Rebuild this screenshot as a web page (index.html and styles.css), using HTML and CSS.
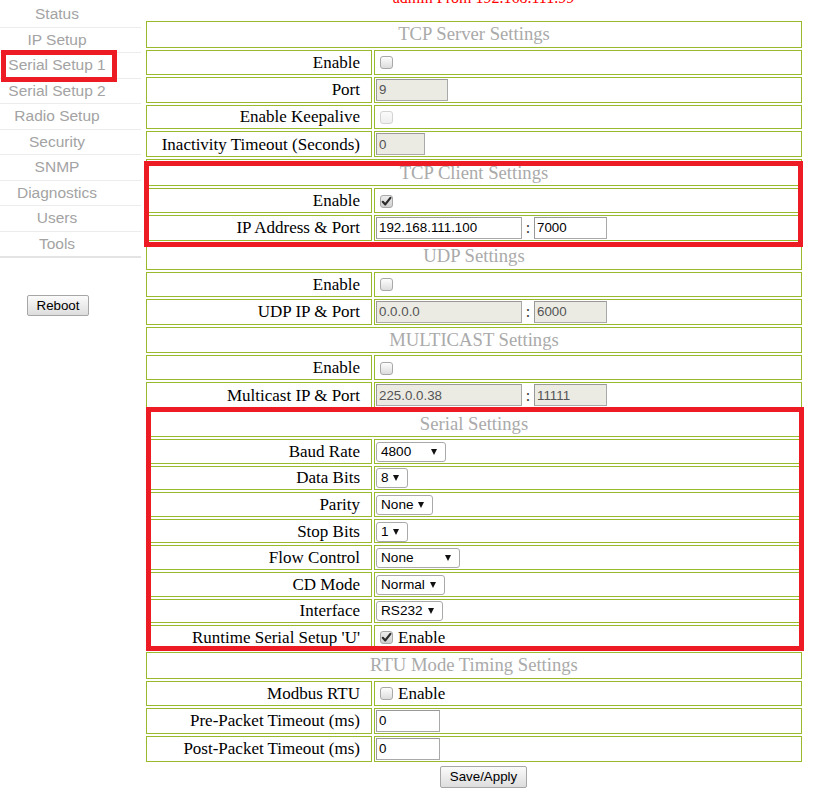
FILE: index.html
```html
<!DOCTYPE html>
<html lang="en">
<head>
<meta charset="utf-8">
<title>Serial Setup 1</title>
<link rel="stylesheet" href="styles.css">
</head>
<body>
<div class="page">
  <nav class="side">
    <ul class="menu">
      <li>Status</li>
      <li>IP Setup</li>
      <li>Serial Setup 1</li>
      <li>Serial Setup 2</li>
      <li>Radio Setup</li>
      <li>Security</li>
      <li>SNMP</li>
      <li>Diagnostics</li>
      <li>Users</li>
      <li>Tools</li>
    </ul>
    <div class="side-actions"><button class="btn btn-reboot">Reboot</button></div>
  </nav>
  <main class="main">
    <div class="user">admin From 192.168.111.99</div>
    <table class="settings">
      <tr class="hdr"><td colspan="2">TCP Server Settings</td></tr>
      <tr class="r-cb"><td class="lbl">Enable</td><td class="val"><span class="cb"></span></td></tr>
      <tr class="r-in"><td class="lbl">Port</td><td class="val"><input class="txt dis w-port" value="9" readonly></td></tr>
      <tr class="r-cb"><td class="lbl">Enable Keepalive</td><td class="val"><span class="cb dis"></span></td></tr>
      <tr class="r-in"><td class="lbl">Inactivity Timeout (Seconds)</td><td class="val"><input class="txt dis w-inact" value="0" readonly></td></tr>

      <tr class="hdr"><td colspan="2">TCP Client Settings</td></tr>
      <tr class="r-cb"><td class="lbl">Enable</td><td class="val"><span class="cb on"><svg viewBox="0 0 11 11" class="tick"><path d="M1.8 5.8 L4.3 8.4 L9.4 1.8"/></svg></span></td></tr>
      <tr class="r-in"><td class="lbl">IP Address &amp; Port</td><td class="val"><div class="pair"><input class="txt w-ip" value="192.168.111.100"><span class="colon">:</span><input class="txt w-ipport" value="7000"></div></td></tr>

      <tr class="hdr"><td colspan="2">UDP Settings</td></tr>
      <tr class="r-cb"><td class="lbl">Enable</td><td class="val"><span class="cb"></span></td></tr>
      <tr class="r-in"><td class="lbl">UDP IP &amp; Port</td><td class="val"><div class="pair"><input class="txt dis w-ip" value="0.0.0.0" readonly><span class="colon">:</span><input class="txt dis w-ipport" value="6000" readonly></div></td></tr>

      <tr class="hdr"><td colspan="2">MULTICAST Settings</td></tr>
      <tr class="r-cb"><td class="lbl">Enable</td><td class="val"><span class="cb"></span></td></tr>
      <tr class="r-in"><td class="lbl">Multicast IP &amp; Port</td><td class="val"><div class="pair"><input class="txt dis w-ip" value="225.0.0.38" readonly><span class="colon">:</span><input class="txt dis w-ipport" value="11111" readonly></div></td></tr>

      <tr class="hdr"><td colspan="2">Serial Settings</td></tr>
      <tr class="r-sel"><td class="lbl">Baud Rate</td><td class="val"><span class="sel s-baud"><span>4800</span><span class="arr"></span></span></td></tr>
      <tr class="r-sel"><td class="lbl">Data Bits</td><td class="val"><span class="sel s-data"><span>8</span><span class="arr"></span></span></td></tr>
      <tr class="r-sel"><td class="lbl">Parity</td><td class="val"><span class="sel s-parity"><span>None</span><span class="arr"></span></span></td></tr>
      <tr class="r-sel"><td class="lbl">Stop Bits</td><td class="val"><span class="sel s-stop"><span>1</span><span class="arr"></span></span></td></tr>
      <tr class="r-sel"><td class="lbl">Flow Control</td><td class="val"><span class="sel s-flow"><span>None</span><span class="arr"></span></span></td></tr>
      <tr class="r-sel"><td class="lbl">CD Mode</td><td class="val"><span class="sel s-cd"><span>Normal</span><span class="arr"></span></span></td></tr>
      <tr class="r-sel"><td class="lbl">Interface</td><td class="val"><span class="sel s-if"><span>RS232</span><span class="arr"></span></span></td></tr>
      <tr class="r-cb"><td class="lbl">Runtime Serial Setup 'U'</td><td class="val"><div class="cbl"><span class="cb on"><svg viewBox="0 0 11 11" class="tick"><path d="M1.8 5.8 L4.3 8.4 L9.4 1.8"/></svg></span>Enable</div></td></tr>

      <tr class="hdr"><td colspan="2">RTU Mode Timing Settings</td></tr>
      <tr class="r-cb"><td class="lbl">Modbus RTU</td><td class="val"><div class="cbl"><span class="cb"></span>Enable</div></td></tr>
      <tr class="r-in"><td class="lbl">Pre-Packet Timeout (ms)</td><td class="val"><input class="txt w-ms" value="0"></td></tr>
      <tr class="r-in"><td class="lbl">Post-Packet Timeout (ms)</td><td class="val"><input class="txt w-ms" value="0"></td></tr>
    </table>
    <div class="actions"><button class="btn btn-save">Save/Apply</button></div>
  </main>
</div>
<div class="mark mark-nav"></div>
<div class="mark mark-client"></div>
<div class="mark mark-serial"></div>
</body>
</html>
```
FILE: styles.css
```css
* { box-sizing: border-box; }

body {
  margin: 0;
  background: #fff;
  font-family: "Liberation Serif", "Times New Roman", serif;
  overflow: hidden;
}

.page {
  display: flex;
  align-items: flex-start;
  gap: 3px;
}

/* ---------- sidebar ---------- */
.side {
  width: 141px;
  flex: none;
  padding-top: 2px;
}

.menu {
  list-style: none;
  margin: 0;
  padding: 0;
}

.menu li {
  font-family: "Liberation Sans", Arial, sans-serif;
  font-size: 15.5px;
  line-height: 18.5px;
  padding: 3px 27px 3px 0;
  text-align: center;
  color: #a3a3a3;
  border-bottom: 1px solid #ececec;
}

.menu li:last-child {
  border-bottom: 2px solid #e4e4e4;
}

.side-actions {
  padding: 37px 25px 0 0;
  text-align: center;
}

.btn {
  font-family: "Liberation Sans", Arial, sans-serif;
  font-size: 13.33px;
  color: #000;
  margin: 0;
  padding: 0 8px;
  border: 1px solid #a6a6a6;
  border-radius: 2px;
  background: linear-gradient(#fbfbfb, #dddddd);
}

.btn-reboot { height: 21px; width: 62px; }
.btn-save { height: 22px; width: 87px; }

/* ---------- main ---------- */
.main {
  width: 679px;
  flex: none;
}

.user {
  margin-top: -11px;
  height: 18px;
  line-height: 18px;
  font-size: 16px;
  color: #ff0000;
  text-align: center;
}

.settings {
  border-collapse: separate;
  border-spacing: 2px;
  width: 660px;
  margin-top: 12px;
}

.settings td {
  border: 1px solid #9aba2e;
  padding: 0;
  vertical-align: middle;
}

.hdr td {
  height: 26.8px;
  text-align: center;
  color: #aaaaaa;
  font-size: 18.67px;
  line-height: 20px;
}

.r-cb td { height: 24.8px; }
.r-in td { height: 26px; }
.r-sel td { height: 24.6px; }

.settings td.lbl {
  width: 226px;
  text-align: right;
  padding-right: 11px;
  font-size: 17px;
  line-height: 19px;
  color: #000;
}

.settings td.val {
  padding-left: 1px;
  font-size: 17px;
  line-height: 19px;
}

/* checkbox */
.cb {
  display: inline-block;
  position: relative;
  width: 13px;
  height: 13px;
  margin: 3px 3px 3px 4px;
  vertical-align: middle;
  border: 1px solid #a8a8a8;
  border-radius: 3px;
  background: linear-gradient(#fdfdfd, #dcdcdc);
}

.cb.dis {
  border-color: #d3d3d3;
  background: linear-gradient(#fbfbfb, #eeeeee);
}

.cb.on {
  background: linear-gradient(#ececec, #cfcfcf);
}

.tick {
  position: absolute;
  left: 0;
  top: 0;
  width: 11px;
  height: 11px;
}

.tick path {
  fill: none;
  stroke: #2b2b2b;
  stroke-width: 2.2;
  stroke-linecap: round;
  stroke-linejoin: round;
}

.cbl {
  display: flex;
  align-items: center;
}

.cbl .cb { margin-right: 5px; }

/* text inputs */
.pair {
  display: flex;
  align-items: center;
}

.txt {
  font-family: "Liberation Sans", Arial, sans-serif;
  font-size: 13.33px;
  height: 22px;
  margin: 0;
  padding: 1px 2px;
  border: 1px solid #a9a9a9;
  border-top-color: #999;
  border-left-color: #999;
  background: #fff;
  color: #000;
  vertical-align: middle;
  outline: none;
}

.txt.dis {
  background: #ebebe4;
  color: #545454;
}

.w-port { width: 72px; }
.w-inact { width: 49px; }
.w-ip { width: 146px; }
.w-ipport { width: 73px; }
.w-ms { width: 64px; }

.colon {
  display: inline-block;
  width: 12px;
  text-align: center;
  font-size: 16px;
  color: #333;
}

/* selects */
.sel {
  display: inline-flex;
  align-items: center;
  justify-content: space-between;
  height: 20px;
  padding: 0 8px 0 4px;
  border: 1px solid #a9a9a9;
  border-radius: 3px;
  background: #fff;
  font-family: "Liberation Sans", Arial, sans-serif;
  font-size: 13.6px;
  line-height: 16px;
  color: #000;
  vertical-align: middle;
}

.arr {
  width: 0;
  height: 0;
  border-left: 3px solid transparent;
  border-right: 3px solid transparent;
  border-top: 6px solid #111;
}

.s-baud { width: 70px; }
.s-data { width: 32px; }
.s-parity { width: 57px; }
.s-stop { width: 32px; }
.s-flow { width: 84px; }
.s-cd { width: 69px; }
.s-if { width: 67px; }

.actions {
  margin-top: 2px;
  text-align: center;
}

/* ---------- red annotation frames (overlay) ---------- */
.mark {
  position: absolute;
  border: 5px solid #ed1c24;
  pointer-events: none;
}

.mark-nav { left: 1px; top: 50px; width: 116px; height: 32px; }
.mark-client { left: 144px; top: 161px; width: 659px; height: 86px; }
.mark-serial { left: 146px; top: 407px; width: 658px; height: 244px; }
```
